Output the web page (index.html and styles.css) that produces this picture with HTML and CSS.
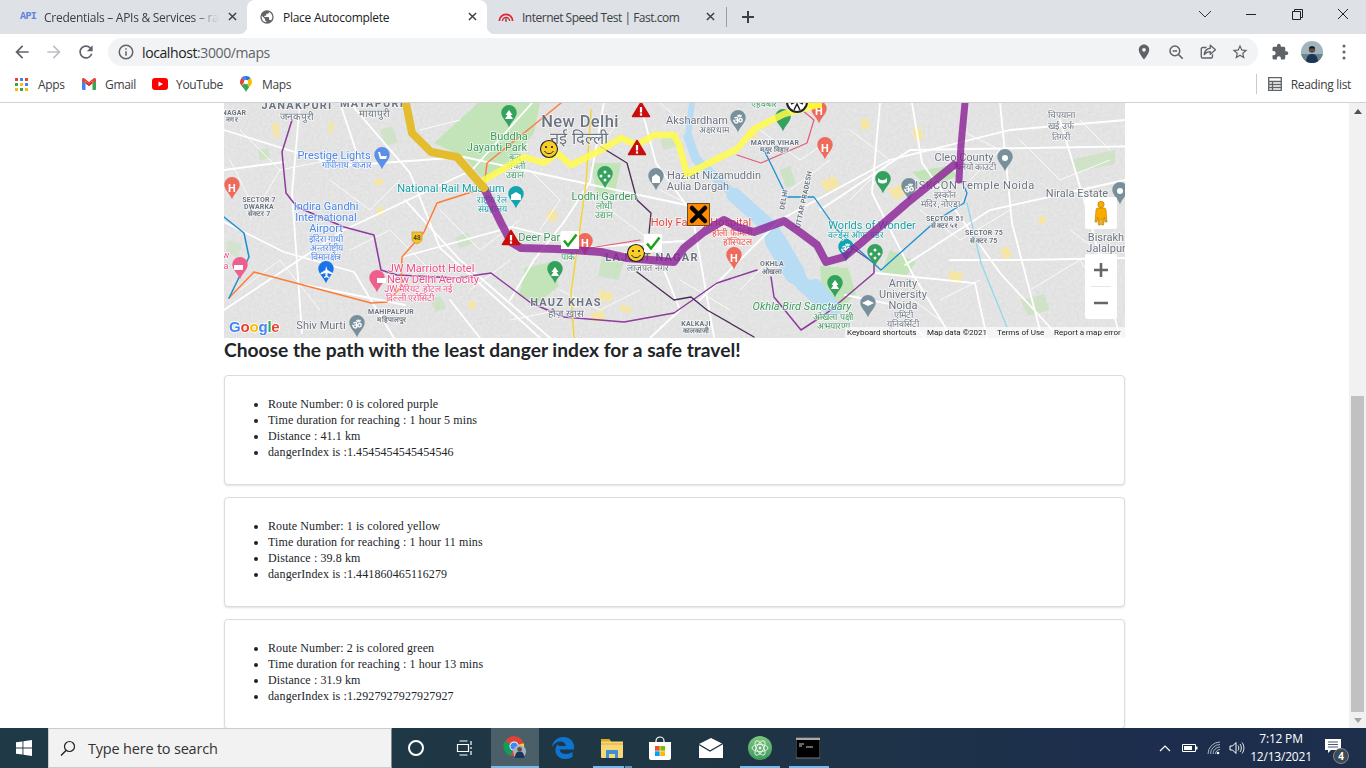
FILE: index.html
```html
<!DOCTYPE html>
<html lang="en">
<head>
<meta charset="utf-8">
<title>Place Autocomplete</title>
<link rel="stylesheet" href="styles.css">
</head>
<body>
<div class="screen">
  <header class="tabstrip">
    <div class="tab tab-first">
      <span class="api-fav">API</span>
      <span class="tab-title fade">Credentials – APIs &amp; Services – raksha</span>
      <svg class="tab-x" viewBox="0 0 10 10"><path d="M1 1l8 8M9 1l-8 8"/></svg>
    </div>
    <div class="tab tab-active">
      <svg class="fav" viewBox="0 0 24 24"><path fill="#5f6368" d="M12 2a10 10 0 100 20 10 10 0 000-20zm-1 17.900A8 8 0 014 12c0-.6.1-1.200.2-1.800L9 15v1c0 1.100.9 2 2 2v1.900zm6.900-2.500c-.3-.8-1-1.400-1.900-1.400h-1v-3c0-.6-.4-1-1-1H8v-2h2c.6 0 1-.4 1-1V7h2c1.100 0 2-.9 2-2v-.4a8 8 0 012.900 12.800z"/></svg>
      <span class="tab-title">Place Autocomplete</span>
      <svg class="tab-x" viewBox="0 0 10 10"><path d="M1 1l8 8M9 1l-8 8"/></svg>
    </div>
    <div class="tab tab-last">
      <svg class="fav" viewBox="0 0 18 14"><path d="M1.500 11.500a7.500 7.500 0 0115 0" fill="none" stroke="#e32636" stroke-width="2"/><path d="M5 11.500a4 4 0 018 0" fill="none" stroke="#e32636" stroke-width="1.600"/><path d="M8 12l1-5 1 5z" fill="#333"/></svg>
      <span class="tab-title tab-title-tight">Internet Speed Test | Fast.com</span>
      <svg class="tab-x" viewBox="0 0 10 10"><path d="M1 1l8 8M9 1l-8 8"/></svg>
    </div>
    <span class="tab-sep"></span>
    <svg class="newtab" viewBox="0 0 12 12"><path d="M6 0v12M0 6h12"/></svg>
    <div class="winctl">
      <svg class="wc" viewBox="0 0 46 14"><path d="M17 4l6 6 6-6" fill="none" stroke="#333"/></svg>
      <svg class="wc" viewBox="0 0 46 14"><path d="M18 7.500h10" stroke="#222" fill="none"/></svg>
      <svg class="wc" viewBox="0 0 46 14"><path d="M18.500 4.500h8v8h-8zM20.500 4.500v-2h8v8h-2" stroke="#222" fill="none"/></svg>
      <svg class="wc" viewBox="0 0 46 14"><path d="M18 2l10 10M28 2L18 12" stroke="#222" fill="none"/></svg>
    </div>
  </header>

  <nav class="toolbar">
    <button class="tbtn"><svg class="ico20" viewBox="0 0 24 24"><path fill="#5f6368" d="M20 11H7.830l5.590-5.590L12 4l-8 8 8 8 1.410-1.410L7.830 13H20z"/></svg></button>
    <button class="tbtn"><svg class="ico20" viewBox="0 0 24 24"><path fill="#bdc1c6" d="M4 11h12.170l-5.590-5.590L12 4l8 8-8 8-1.410-1.410L16.170 13H4z"/></svg></button>
    <button class="tbtn"><svg class="ico20" viewBox="0 0 24 24"><path fill="#5f6368" d="M17.650 6.350A7.958 7.958 0 0012 4c-4.420 0-7.990 3.580-7.990 8s3.570 8 7.990 8c3.730 0 6.840-2.550 7.730-6h-2.080A5.990 5.990 0 0112 18c-3.310 0-6-2.690-6-6s2.690-6 6-6c1.660 0 3.140.69 4.220 1.780L13 11h7V4l-2.350 2.350z"/></svg></button>
    <div class="omnibox">
      <svg class="info" viewBox="0 0 24 24"><path fill="#5f6368" d="M11 7h2v2h-2zm0 4h2v6h-2zm1-9a10 10 0 100 20 10 10 0 000-20zm0 18a8 8 0 110-16 8 8 0 010 16z"/></svg>
      <span class="url"><span class="host">localhost</span>:3000/maps</span>
      <span class="omni-icons">
        <button class="tbtn"><svg class="ico18" viewBox="0 0 24 24"><path fill="#5f6368" fill-rule="evenodd" d="M12 2C8.130 2 5 5.130 5 9c0 5.250 7 13 7 13s7-7.750 7-13c0-3.870-3.130-7-7-7zm0 9.500a2.500 2.500 0 110-5 2.500 2.500 0 010 5z"/></svg></button>
        <button class="tbtn"><svg class="ico18" viewBox="0 0 24 24"><circle cx="10.500" cy="10.500" r="6.500" fill="none" stroke="#5f6368" stroke-width="2"/><path d="M15.500 15.500L21 21M7.500 10.500h6" stroke="#5f6368" stroke-width="2" fill="none"/></svg></button>
        <button class="tbtn"><svg class="ico18" viewBox="0 0 24 24"><path d="M10 6H5a2 2 0 00-2 2v10a2 2 0 002 2h11a2 2 0 002-2v-3" fill="none" stroke="#5f6368" stroke-width="1.800"/><path d="M15 3l7 6-7 6v-3.500c-4 0-6 1.500-8 4 .5-5 3-8 8-8.500z" fill="none" stroke="#5f6368" stroke-width="1.800" stroke-linejoin="round"/></svg></button>
        <button class="tbtn"><svg class="ico18" viewBox="0 0 24 24"><path fill="#5f6368" d="M22 9.240l-7.190-.62L12 2 9.190 8.630 2 9.240l5.460 4.730L5.820 21 12 17.270 18.180 21l-1.630-7.030L22 9.240zM12 15.400l-3.760 2.270 1-4.280-3.320-2.880 4.380-.38L12 6.100l1.710 4.040 4.380.38-3.320 2.880 1 4.280L12 15.400z"/></svg></button>
      </span>
    </div>
    <button class="tbtn"><svg class="ico18" viewBox="0 0 24 24"><path fill="#5f6368" d="M20.500 11H19V7c0-1.100-.9-2-2-2h-4V3.500C13 2.120 11.880 1 10.500 1S8 2.120 8 3.500V5H4c-1.100 0-1.990.9-1.990 2v3.800H3.500c1.490 0 2.700 1.210 2.700 2.700s-1.210 2.700-2.700 2.700H2V20c0 1.100.9 2 2 2h3.800v-1.500c0-1.490 1.210-2.700 2.700-2.700 1.490 0 2.700 1.210 2.700 2.700V22H17c1.100 0 2-.9 2-2v-4h1.500c1.380 0 2.500-1.120 2.500-2.500S21.880 11 20.500 11z"/></svg></button>
    <button class="tbtn"><svg class="avatar" viewBox="0 0 22 22"><defs><clipPath id="avc"><circle cx="11" cy="11" r="11"/></clipPath></defs><g clip-path="url(#avc)"><rect width="22" height="22" fill="#9fb6c2"/><rect y="13" width="22" height="9" fill="#6f8587"/><path d="M5 22c0-6 2-9 6-9s6 3 6 9z" fill="#1d3557"/><circle cx="11" cy="8.500" r="3.200" fill="#6b4a3a"/><path d="M8 7.500c0-3 6-3 6 0z" fill="#1a1a1a"/></g></svg></button>
    <button class="tbtn"><svg class="dots" viewBox="0 0 4 16"><circle cx="2" cy="2" r="1.500"/><circle cx="2" cy="8" r="1.500"/><circle cx="2" cy="14" r="1.500"/></svg></button>
  </nav>

  <nav class="bookmarks">
    <span class="bm bm-apps">
      <svg class="bm-ico-apps" viewBox="0 0 13 13"><g><rect width="3" height="3" fill="#ea4335"/><rect x="5" width="3" height="3" fill="#4285f4"/><rect x="10" width="3" height="3" fill="#ea4335"/><rect y="5" width="3" height="3" fill="#34a853"/><rect x="5" y="5" width="3" height="3" fill="#fbbc05"/><rect x="10" y="5" width="3" height="3" fill="#4285f4"/><rect y="10" width="3" height="3" fill="#fbbc05"/><rect x="5" y="10" width="3" height="3" fill="#34a853"/><rect x="10" y="10" width="3" height="3" fill="#fbbc05"/></g></svg>
      <span>Apps</span>
    </span>
    <span class="bm bm-gmail">
      <svg class="bm-ico" viewBox="0 0 14 12"><path d="M0 2v9a1 1 0 001 1h2.500V5.500z" fill="#4285f4"/><path d="M14 2v9a1 1 0 01-1 1h-2.500V5.500z" fill="#34a853"/><path d="M0 1.500C0 .3 1.300-.4 2.300.3L7 4l4.700-3.700c1-.7 2.300 0 2.300 1.200V3l-3.500 2.600V2.800L7 5.500 3.500 2.800v2.800L0 3z" fill="#ea4335"/><path d="M3.500 2.800L7 5.500l3.500-2.700v2.800L7 8.200 3.500 5.600z" fill="#d93025"/></svg>
      <span>Gmail</span>
    </span>
    <span class="bm bm-yt">
      <svg class="bm-ico-yt" viewBox="0 0 16 12"><rect width="16" height="12" rx="3" fill="#f00"/><path d="M6.500 3.500v5L11 6z" fill="#fff"/></svg>
      <span>YouTube</span>
    </span>
    <span class="bm">
      <svg class="bm-ico-map" viewBox="0 0 12 16"><path d="M6 0a6 6 0 00-4.600 9.800L6 4z" fill="#ea4335"/><path d="M6 0a6 6 0 00-4.600 2.100L6 6z" fill="#4285f4"/><path d="M6 0c1.800 0 3.400.8 4.500 2L6 6z" fill="#1a73e8"/><path d="M10.500 2A6 6 0 0112 6c0 2-1.500 3.800-3 5.500L6 6z" fill="#fbbc04"/><path d="M1.400 9.800C3 11.800 5 13.500 6 16c1-2.500 2-3 3-4.500L6 6z" fill="#34a853"/><circle cx="6" cy="6" r="2.200" fill="#fff"/></svg>
      <span>Maps</span>
    </span>
    <span class="bm-sep"></span>
    <span class="bm bm-read">
      <svg class="bm-ico" viewBox="0 0 14 14"><path d="M.7.7h12.600v12.600H.7zM.7 4.500h12.600M.7 7.500h12.600M.7 10.500h12.600M4.500 4.500v8.800" fill="none" stroke="#5f6368" stroke-width="1.300"/></svg>
      <span>Reading list</span>
    </span>
  </nav>

  <div class="viewport">
    <main class="page">
      <svg class="map" viewBox="224 103 901 235" role="img" aria-label="Map of Delhi with routes">
        <defs>
          <filter id="grain" x="0" y="0" width="100%" height="100%"><feTurbulence type="fractalNoise" baseFrequency="0.35" numOctaves="2" seed="4"/><feColorMatrix values="0 0 0 0 0.45 0 0 0 0 0.45 0 0 0 0 0.45 0 0 0 0.5 -0.12"/></filter>
          <filter id="soft"><feGaussianBlur stdDeviation="0.4"/></filter>
          <symbol id="pin" viewBox="0 0 20 28" overflow="visible"><path d="M10 0a9 9 0 00-9 9c0 6 6.500 10 9 17 2.500-7 9-11 9-17a9 9 0 00-9-9z"/></symbol>
          <g id="warn"><path d="M0-8.500L8.500 5.500H-8.500z" fill="#c90d0d" stroke="#c90d0d" stroke-width="1.500" stroke-linejoin="round"/><rect x="-1.100" y="-4" width="2.200" height="5.500" fill="#fff"/><rect x="-1.100" y="2.400" width="2.200" height="2.200" fill="#fff"/></g>
          <g id="smile"><circle r="8.500" fill="#f8ce27" stroke="#222" stroke-width="1.100"/><circle cx="-3" cy="-2" r="1.100" fill="#222"/><circle cx="3" cy="-2" r="1.100" fill="#222"/><path d="M-4.500 2c2 3.500 7 3.500 9 0" fill="none" stroke="#222" stroke-width="1"/></g>
          <g id="check"><rect x="-9" y="-9" width="18" height="18" fill="#fff"/><path d="M-6 .5l4 5L6.500-5.500" fill="none" stroke="#1fa01f" stroke-width="2.500"/></g>
        </defs>

        <rect x="224" y="103" width="901" height="235" fill="#e7e7e7"/>
        <rect x="224" y="103" width="901" height="235" filter="url(#grain)" opacity=".55"/>

        <g filter="url(#soft)">
          <g fill="#c3e3b8">
            <path d="M434 143L478 103H540L534 133 507 167 484 180 464 157z"/>
            <path d="M591 163h30l-6 30-18 4z"/>
            <path d="M525 268l26-6 8 24-20 16-20-6z"/>
            <path d="M820 266l28 2 8 26-18 18-16-14z"/>
            <path d="M890 250l26 12-10 14-24-4z"/>
            <path d="M912 172l36-6 10 10-30 12z"/>
            <path d="M602 258l22 4-6 18-20-4z" opacity=".7"/>
            <path d="M455 238l12-6 6 12-14 4z" opacity=".6"/>
            <path d="M228 240l14 4-4 14-12-6z" opacity=".5"/>
            <path d="M1070 160l45-10v14l-40 8z" opacity=".6"/>
            <path d="M780 170l10-4 6 18-10 4z" opacity=".7"/>
            <path d="M380 130l12-4 6 16-12 4zM258 150l10-2 2 10-10 2zM1020 300l24-6 6 16-22 6zM660 140l14-6 4 12-14 4zM430 300l10-4 6 12-10 4z" opacity=".6"/>
          </g>
          <g fill="#f6e6a6">
            <path d="M272 124l6-2 2 14-6 2zM374 180l8-2 2 6-8 2zM378 206l6 2-2 8-6-2zM548 210l10 2-2 10-10-2zM640 250l12 2-2 8-10-2zM600 290l14 4-4 8-12-2zM820 182l14-6 6 10-14 6zM888 190l18-8 6 8-16 10zM912 130l8-4 4 12-8 4zM1000 250l8-4 4 10-8 4zM590 314l12-4 4 8-12 4zM950 270l14 4-6 10-10-4zM745 132l10-6 4 10-8 4zM330 120l4 4-2 10-4-2zM470 300l6 2-2 8-6-2zM620 305l12 2-2 6-10-2zM860 120l8-2 2 10-8 2zM1040 215l6 2-2 8-6-2z"/>
          </g>
          <g fill="none" stroke="#b8dcf3" stroke-linecap="round" stroke-linejoin="round">
            <path d="M688 137l8 22 38 36" stroke-width="9"/>
            <path d="M692 103l-4 34" stroke-width="6"/>
            <path d="M734 195l38 34 14 32 16 22 24 22" stroke-width="15"/>
            <path d="M775 240l20 34" stroke-width="21"/>
            <path d="M815 285l20 24" stroke-width="13"/>
          </g>
          <g fill="none" stroke="#fff" stroke-width="1.800" stroke-linecap="round">
            <path d="M224 130L340 166 464 157 560 178 700 208"/>
            <path d="M224 310l120-80 128-60 60-67"/>
            <path d="M300 103l-8 90 10 140"/>
            <path d="M350 103l60 70 30 75 100 90"/>
            <path d="M405 200l55 60 90 78"/>
            <path d="M402 257l110-30 82 20 90-6"/>
            <path d="M510 300l24-40 30-38 26-40 14-80"/>
            <path d="M224 222l60 30 70 20 40 66"/>
            <path d="M640 103l16 60 36 50 22 124"/>
            <path d="M700 300l80-80 110-60 120-30 115-10"/>
            <path d="M880 103l-8 90 40 80 40 65"/>
            <path d="M912 103l10 60 78 110 60 65"/>
            <path d="M1000 103l12 120 30 115"/>
            <path d="M1060 120l30 100 30 118"/>
            <path d="M820 210l90-60 240-4"/>
            <path d="M1020 260l105-2M950 260h70"/>
            <path d="M875 273l100 10 12 55"/>
            <path d="M845 295l50 10 30 33"/>
            <path d="M660 260l20 50-30 28"/>
            <path d="M450 300l30 38M305 285l100 20"/>
            <path d="M224 170l60-8M340 103l20 60"/>
            <path d="M1125 180L990 210 905 265"/>
          </g>
          <g fill="none" stroke="#fff" stroke-width=".9" stroke-linecap="round" opacity=".9">
            <path d="M240 130l40 40 50-10M250 220l30-50M330 180l40 30 30-30M350 250l40-20 40 40M440 210l40 40 40-30M470 290l40-30M530 170l30 30-20 30M560 290l40 20 40-20M610 210l40 30M620 120l-30 40M660 190l40 20M680 280l50 30M740 290l30-30M760 130l40 30 30-20M790 190l40-30M850 130l40 30-20 30M830 220l30 30M920 210l40 30 50-30M960 130l40 20-30 30M1020 140l40 40 50-20M1030 290l50-30 30 50M940 300l40-20M900 290l40 30M1070 230l40 30M1080 120l30 30M420 130l40-10M240 290l40-30 40 50M230 160l20 40M510 320l50-10M680 120l-20-17M850 200l30-30"/>
          </g>

          <g fill="none" stroke-linejoin="round" stroke-linecap="round">
            <path stroke="#8e3a9d" stroke-width="1.500" d="M292 120l-10 32 4 41 11 14 47 20 30 8 7 35 16 5 60 3 34-5 40 30 33 14 60 5 50-9 43-30 40-13"/>
            <path stroke="#8e3a9d" stroke-width="1.500" d="M771 277l3 20 27 33 26-17 47-40v-10l-23-16"/>
            <path stroke="#ff7b39" stroke-width="1.500" d="M229 298l25-26 117 31 16-1 14-15 1-30 22-25 13-29 47-15 3-25 74-60"/>
            <path stroke="#1a8fd1" stroke-width="1.500" d="M224 217l20 16 5 24-20 41"/>
            <path stroke="#4b2a55" stroke-width="1.300" d="M601 147l26 16 10 37 14 13-2 20"/>
            <path stroke="#4b2a55" stroke-width="1.300" d="M637 272l37 28 17-3 16 13 47 27"/>
            <path stroke="#f4d436" stroke-width="1.500" d="M591 110l-5 73-15 110 3 44"/>
            <path stroke="#e35a78" stroke-width="1.200" d="M737 155l24 8 46-20 7-23-24-20"/>
            <path stroke="#1a8fd1" stroke-width="1.300" d="M764 150l23 47h27l23 33 44 40 56-50 27-17 3-10-6-13"/>
            <path stroke="#8fd9e8" stroke-width="1.300" d="M967 203l14 60 26 64"/>
            <path stroke="#e35a78" stroke-width="1.200" d="M640 240l-50 8"/>
          </g>
        </g>

        <g class="pins">
          <use href="#pin" x="500" y="105" width="18" height="24" fill="#34a15d"/>
          <use href="#pin" x="373" y="147" width="18" height="24" fill="#5b8fe8"/>
          <use href="#pin" x="223" y="177" width="18" height="24" fill="#ee6a5a"/>
          <use href="#pin" x="507" y="186" width="18" height="24" fill="#12a5b0"/>
          <use href="#pin" x="596" y="166" width="18" height="24" fill="#34a15d"/>
          <use href="#pin" x="647" y="168" width="18" height="24" fill="#78909c"/>
          <use href="#pin" x="317" y="261" width="18" height="24" fill="#1a73e8"/>
          <use href="#pin" x="368" y="270" width="18" height="24" fill="#ee5f8e"/>
          <use href="#pin" x="231" y="257" width="18" height="24" fill="#ee5f8e"/>
          <use href="#pin" x="348" y="315" width="18" height="24" fill="#78909c"/>
          <use href="#pin" x="546" y="261" width="18" height="24" fill="#34a15d"/>
          <use href="#pin" x="576" y="233" width="18" height="24" fill="#ee6a5a"/>
          <use href="#pin" x="729" y="110" width="18" height="24" fill="#78909c"/>
          <use href="#pin" x="774" y="109" width="18" height="24" fill="#34a15d"/>
          <use href="#pin" x="816" y="137" width="18" height="24" fill="#ee6a5a"/>
          <use href="#pin" x="725" y="247" width="18" height="24" fill="#ee6a5a"/>
          <use href="#pin" x="810" y="101" width="18" height="24" fill="#ee6a5a"/>
          <use href="#pin" x="874" y="171" width="18" height="24" fill="#34a15d"/>
          <use href="#pin" x="900" y="178" width="18" height="24" fill="#78909c"/>
          <use href="#pin" x="996" y="149" width="18" height="24" fill="#78909c"/>
          <use href="#pin" x="1111" y="182" width="18" height="24" fill="#78909c"/>
          <use href="#pin" x="837" y="239" width="18" height="24" fill="#12a5b0"/>
          <use href="#pin" x="866" y="244" width="18" height="24" fill="#34a15d"/>
          <use href="#pin" x="826" y="275" width="18" height="24" fill="#34a15d"/>
          <use href="#pin" x="859" y="295" width="18" height="24" fill="#78909c"/>
          <g class="pin-glyph">
            <text x="232" y="192">H</text><text x="585" y="247">H</text><text x="825" y="152">H</text><text x="734" y="262">H</text><text x="819" y="115">H</text>
            <text x="738" y="124">ॐ</text><text x="909" y="193">ॐ</text><text x="846" y="253">ॐ</text><text x="357" y="329">ॐ</text>
          </g>
          <path d="M326 266l1.500 4 5 3v1.500l-5-1.500v3l1.500 1v1l-2.500-.7-2.500.7v-1l1.500-1v-3l-5 1.500V273l5-3z" fill="#fff"/>
          <path d="M509 110l3.500 5h-2l2.500 4h-8l2.500-4h-2z" fill="#fff"/>
          <path d="M555 267l3.500 5h-2l2.500 4h-8l2.500-4h-2z" fill="#fff"/>
          <path d="M835 280l3.500 5h-2l2.500 4h-8l2.500-4h-2z" fill="#fff"/>
          <circle cx="1005" cy="158" r="3" fill="#fff"/><circle cx="1120" cy="191" r="3" fill="#fff"/>
          <g fill="#fff"><circle cx="605" cy="172" r="1.500"/><circle cx="601" cy="176" r="1.500"/><circle cx="609" cy="176" r="1.500"/><circle cx="605" cy="180" r="1.500"/><circle cx="875" cy="250" r="1.500"/><circle cx="871" cy="254" r="1.500"/><circle cx="879" cy="254" r="1.500"/><circle cx="875" cy="258" r="1.500"/></g>
          <path d="M378 152h2l1 4h6l-1 3h-6zM878 178c3 3 6 3 9 0v4c-3 2-6 2-9 0z" fill="#fff"/>
          <path d="M377 278h9v5h-9zM234 265h9v5h-9z" fill="#fff"/>
          <path d="M652 183v-6l4-3 4 3v6z" fill="#fff"/>
          <path d="M511 200v-5l5-3 5 3v5z" fill="#fff"/>
          <path d="M862 303l6-3 6 3-6 3z" fill="#fff"/>
          <path d="M412 232h10v7c0 3-3 4-5 5-2-1-5-2-5-5z" fill="#f2c230" stroke="#c99a1b" stroke-width=".7"/>
          <text class="hw" x="417" y="240">48</text>
        </g>

        <g class="lb lb-grey">
          <text class="caps" x="297" y="109">JANAKPURI</text>
          <text x="297" y="120" class="small-g">जनकपुरी</text>
          <text class="caps" x="372" y="107">MAYAPURI</text>
          <text x="374" y="117" class="small-g">मायापुरी</text>
          <text class="big" x="580" y="127">New Delhi</text>
          <text class="big" x="579" y="144">नई दिल्ली</text>
          <text class="caps" x="566" y="306">HAUZ KHAS</text>
          <text x="566" y="317" class="small-g">हौज़ खास</text>
          <text class="caps" x="652" y="261">LAJPAT NAGAR</text>
          <text x="648" y="271" class="small">लाजपत नगर</text>
          <text x="321" y="329">Shiv Murti</text>
          <text class="mini" x="391" y="314">MAHIPALPUR</text>
          <text class="mini" x="392" y="322">महिपालपुर</text>
          <text class="mini" x="259" y="202">SECTOR 7</text>
          <text class="mini" x="259" y="209">DWARKA</text>
          <text class="mini" x="259" y="216">सेक्टर 7</text>
          <text class="mini" x="234" y="115">NAGAR</text>
          <text class="mini" x="232" y="122">नगर</text>
          <text x="697" y="124">Akshardham</text>
          <text class="small" x="714" y="133">अक्षरधाम</text>
          <text x="714" y="179">Hazrat Nizamuddin</text>
          <text x="698" y="190">Aulia Dargah</text>
          <text class="mini" x="775" y="145">MAYUR VIHAR</text>
          <text class="mini" x="775" y="152">मयूर विहार</text>
          <text x="964" y="161">Cleo County</text>
          <text x="975" y="170" class="small">क्लियो काउंटी</text>
          <text class="wide" x="975" y="189">ISKCON Temple Noida</text>
          <text class="small" x="945" y="198">इस्कॉन</text>
          <text class="small" x="941" y="207">मंदिर, नोएडा</text>
          <text x="1077" y="197">Nirala Estate</text>
          <text class="mini" x="945" y="221">SECTOR 51</text>
          <text class="mini" x="945" y="228">सेक्टर ५१</text>
          <text class="mini" x="984" y="235">SECTOR 75</text>
          <text class="mini" x="984" y="243">सेक्टर 75</text>
          <text x="1106" y="241">Bisrakh</text>
          <text x="1106" y="252">Jalalpur</text>
          <text x="903" y="287">Amity</text>
          <text x="903" y="298">University</text>
          <text x="903" y="309">Noida</text>
          <text class="small" x="903" y="318">एमिटी</text>
          <text class="small" x="903" y="327">यूनिवर्सिटी</text>
          <text class="mini" x="772" y="266">OKHLA</text>
          <text class="mini" x="772" y="274">ओखला</text>
          <text class="mini" x="696" y="326">KALKAJI</text>
          <text class="mini" x="696" y="333">कालकाजी</text>
          <text x="1061" y="118" class="small">चिपयाना</text>
          <text x="1061" y="129" class="small">खई उर्फ</text>
          <text x="1061" y="140" class="small">तिगरी</text>
          <text class="mini" transform="translate(786 200) rotate(-80)" x="0" y="0">DELHI</text>
          <text class="mini" transform="translate(806 200) rotate(-78)" x="0" y="0">UTTAR PRADESH</text>
        </g>
        <g class="lb lb-blue">
          <text x="334" y="159">Prestige Lights</text>
          <text class="small" x="347" y="168">गोपीनाथ बाजार</text>
          <text x="326" y="210">Indira Gandhi</text>
          <text x="326" y="221">International</text>
          <text x="326" y="232">Airport</text>
          <text class="small" x="326" y="242">इंदिरा गांधी</text>
          <text class="small" x="326" y="251">अन्तर्राष्ट्रीय</text>
          <text class="small" x="326" y="260">विमानक्षेत्र</text>
        </g>
        <g class="lb lb-green">
          <text x="509" y="140">Buddha</text>
          <text x="497" y="151">Jayanti Park</text>
          <text class="small" x="515" y="160">बुद्ध</text>
          <text class="small" x="515" y="169">जयंती</text>
          <text class="small" x="515" y="178">उद्यान</text>
          <text x="604" y="200">Lodhi Garden</text>
          <text class="small" x="604" y="209">लोधी</text>
          <text class="small" x="604" y="218">उद्यान</text>
          <text x="542" y="241">Deer Park</text>
          <text class="small" x="568" y="260">पार्क</text>
          <text class="it" x="802" y="310">Okhla Bird Sanctuary</text>
          <text class="small" x="833" y="320">ओखला पक्षी</text>
          <text class="small" x="833" y="329">अभयारण्य</text>
          <text class="small" x="764" y="107">एहवबार</text>
        </g>
        <g class="lb lb-teal">
          <text x="451" y="192">National Rail Museum</text>
          <text class="small" x="492" y="203">राष्ट्रीय रेल</text>
          <text class="small" x="492" y="212">संग्रहालय</text>
          <text x="872" y="229">Worlds of Wonder</text>
          <text class="small" x="856" y="238">वर्ल्ड्स ऑफ़ वंडर</text>
        </g>
        <g class="lb lb-pink">
          <text x="431" y="272">JW Marriott Hotel</text>
          <text x="433" y="283">New Delhi Aerocity</text>
          <text class="small" x="418" y="292">JW मैरियट होटल नई</text>
          <text class="small" x="410" y="301">दिल्ली एरोसिटी</text>
          <text class="small" x="226" y="258">w</text>
          <text class="small" x="226" y="269">a</text>
        </g>
        <g class="lb lb-red">
          <text x="701" y="226">Holy Family Hospital</text>
          <text class="small" x="732" y="236">होली फैमिली</text>
          <text class="small" x="737" y="245">हॉस्पिटल</text>
        </g>

        <g fill="none" stroke-linejoin="round" stroke-linecap="round">
          <path stroke="#8a1f96" stroke-opacity=".8" stroke-width="8" d="M484 188l17 35 10 19 10 6 36 1 44 3 26 6 47 4 10-14 20-16 20-12 13 7 17 5 30-11 17 12 16 12 9 17 18-5 17-14 46-40 47-38"/>
          <path stroke="#8a1f96" stroke-opacity=".8" stroke-width="7" d="M959 180l2-35 4-42"/>
          <path stroke="#fffb4a" stroke-opacity=".85" stroke-width="6.500" d="M484 180l40-23 20 6 13-10 14 12 30-15 20-12 16 7 17-10h20l5 10 8 29 50-25 17-20 30-15 33-9"/>
          <path stroke="#e3bd2e" stroke-width="8" d="M406 103l6 30 19 19 26 5 27 31"/>
        </g>

        <use href="#warn" x="641" y="111"/>
        <use href="#warn" x="637" y="149"/>
        <use href="#warn" x="511" y="239"/>
        <use href="#smile" x="549" y="149"/>
        <use href="#smile" x="636" y="253"/>
        <use href="#check" x="570" y="240"/>
        <use href="#check" x="653" y="243"/>
        <rect x="687.500" y="203.500" width="22" height="22" fill="#ff8a00" stroke="#6b4a2a"/>
        <path d="M692 208l13 13M705 208l-13 13" stroke="#000" stroke-width="4.500" stroke-linecap="round"/>
        <circle cx="797" cy="102" r="10" fill="#fff" stroke="#222" stroke-width="2"/>
        <path d="M791 104l6-3 6 3M794 110l3-6 3 6" fill="none" stroke="#222" stroke-width="1.500"/>
        <path d="M808 103h14v5h-14z" fill="#fff530"/>

        <text class="glogo" x="229" y="332"><tspan fill="#4285f4">G</tspan><tspan fill="#ea4335">o</tspan><tspan fill="#fbbc05">o</tspan><tspan fill="#4285f4">g</tspan><tspan fill="#34a853">l</tspan><tspan fill="#ea4335">e</tspan></text>

        <rect x="845" y="327" width="280" height="11" fill="#fff" opacity=".65"/>
        <g class="attr">
          <text x="847" y="335">Keyboard shortcuts</text>
          <text x="927" y="335">Map data ©2021</text>
          <text x="997" y="335">Terms of Use</text>
          <text x="1054" y="335">Report a map error</text>
        </g>

        <g class="mapctl">
          <rect x="1085" y="197" width="32" height="32" rx="2" fill="#fff"/>
          <circle cx="1101" cy="204.500" r="3.200" fill="#f9ab00" stroke="#b57a00" stroke-width=".6"/>
          <path d="M1095 222l1-12c0-1.500 1-2 2-2h6c1 0 2 .5 2 2l1 12h-2l-.8-5-.7 8h-1.800v-6h-1.400v6h-1.800l-.7-8-.8 5z" fill="#f9ab00" stroke="#b57a00" stroke-width=".6"/>
          <rect x="1085" y="254" width="32" height="65" rx="2" fill="#fff"/>
          <path d="M1091 286.500h20" stroke="#e6e6e6"/>
          <path d="M1094 270h14M1101 263v14M1094 303h14" stroke="#666" stroke-width="2.600"/>
        </g>
      </svg>

      <h1 class="headline">Choose the path with the least danger index for a safe travel!</h1>

      <section class="card">
        <ul>
          <li>Route Number: 0 is colored purple</li>
          <li>Time duration for reaching : 1 hour 5 mins</li>
          <li>Distance : 41.1 km</li>
          <li>dangerIndex is :1.4545454545454546</li>
        </ul>
      </section>
      <section class="card">
        <ul>
          <li>Route Number: 1 is colored yellow</li>
          <li>Time duration for reaching : 1 hour 11 mins</li>
          <li>Distance : 39.8 km</li>
          <li>dangerIndex is :1.441860465116279</li>
        </ul>
      </section>
      <section class="card">
        <ul>
          <li>Route Number: 2 is colored green</li>
          <li>Time duration for reaching : 1 hour 13 mins</li>
          <li>Distance : 31.9 km</li>
          <li>dangerIndex is :1.2927927927927927</li>
        </ul>
      </section>
    </main>
    <aside class="scrollbar">
      <span class="sb-btn"><span class="arrow-up"></span></span>
      <span class="sb-thumb"></span>
      <span class="sb-btn sb-btn-down"><span class="arrow-down"></span></span>
    </aside>
  </div>

  <footer class="taskbar">
    <span class="start"><svg class="win" viewBox="0 0 16 16"><path fill="#fff" d="M0 2.300l6.500-.9v6.200H0zM7.400 1.300L16 0v7.600H7.400zM0 8.400h6.500v6.200L0 13.700zM7.400 8.400H16V16l-8.600-1.200z"/></svg></span>
    <span class="search">
      <svg class="search-ico" viewBox="0 0 16 16"><circle cx="9.500" cy="6.500" r="5" fill="none" stroke="#222" stroke-width="1.200"/><path d="M6 10.500L1 15.500" stroke="#222" stroke-width="1.400"/></svg>
      <span>Type here to search</span>
    </span>
    <span class="tb-cell"><span class="cortana"></span></span>
    <span class="tb-cell"><svg class="tv" viewBox="0 0 16 16"><path d="M3.500 1h8M3.500 15h8M1.500 4.500h11v7h-11zM15 1v4M15 7v2M15 11v4" fill="none" stroke="#fff" stroke-width="1.200"/></svg></span>
    <span class="tb-cell app app-chrome run">
      <svg class="app-ico" viewBox="0 0 26 26"><circle cx="12" cy="12" r="11" fill="#db4437"/><path d="M12 12L2 6.500A11 11 0 008 22.500z" fill="#0f9d58"/><path d="M12 12l10.500-3A11 11 0 0112 23z" fill="#ffcd40"/><circle cx="12" cy="12" r="5" fill="#fff"/><circle cx="12" cy="12" r="4" fill="#4285f4"/><circle cx="18" cy="18" r="7" fill="#9fb6c2"/><path d="M13 25c0-5 2-7 5-7s5 2 5 7z" fill="#1d3557"/><circle cx="18" cy="15.500" r="2.500" fill="#6b4a3a"/></svg>
    </span>
    <span class="tb-cell app">
      <svg class="app-ico" viewBox="0 0 24 24"><path fill="#0d74d1" d="M12.500 1C6 1 1.500 5.500 1 11c2-3.500 5-5.500 8.500-5.500 3 0 5 1.500 5.500 4.500H7.500C8 6.800 5 9 4.500 13c-.7 5.500 3.500 10 9.500 10 3 0 5.500-.8 7.500-2v-5c-2 1.300-4.300 2-6.500 2-3.500 0-6-1.500-6.500-4.500H23V11C23 5 18.500 1 12.500 1z"/></svg>
    </span>
    <span class="tb-cell app app-folder">
      <svg class="app-ico" viewBox="0 0 24 22"><path d="M1 2h8l2 2.500h12V20a1 1 0 01-1 1H2a1 1 0 01-1-1z" fill="#f8d775"/><path d="M1 2h8l2 2.500H1z" fill="#e0a92c"/><path d="M1 6h22v2H1z" fill="#eac15a"/><path d="M6 21v-8h12v8h-3v-4H9v4z" fill="#3f8fd6"/></svg>
      <span class="ul ul-a"></span><span class="ul ul-b"></span>
    </span>
    <span class="tb-cell app">
      <svg class="app-ico" viewBox="0 0 24 24"><path d="M8 7V5a4 4 0 018 0v2" fill="none" stroke="#fff" stroke-width="1.200"/><path d="M1 6h22v16a2 2 0 01-2 2H3a2 2 0 01-2-2z" fill="#fff"/><rect x="7" y="10" width="4.700" height="4.700" fill="#f25022"/><rect x="12.300" y="10" width="4.700" height="4.700" fill="#7fba00"/><rect x="7" y="15.300" width="4.700" height="4.700" fill="#00a4ef"/><rect x="12.300" y="15.300" width="4.700" height="4.700" fill="#ffb900"/></svg>
    </span>
    <span class="tb-cell app app-mail">
      <svg class="app-ico" viewBox="0 0 24 20"><path d="M0 6L12 0l12 6v14H0z" fill="#fff"/><path d="M0 6.500l11 6.500L24 5.500" fill="none" stroke="#1f3644" stroke-width="1.400"/></svg>
    </span>
    <span class="tb-cell app run-atom">
      <svg class="app-ico" viewBox="0 0 24 24"><defs><linearGradient id="atg" x1="0" y1="0" x2="0" y2="1"><stop offset="0" stop-color="#7bc67e"/><stop offset="1" stop-color="#3d9a5f"/></linearGradient></defs><circle cx="12" cy="12" r="12" fill="url(#atg)"/><g fill="none" stroke="#e5f3e2" stroke-width="1"><ellipse cx="12" cy="12" rx="8" ry="3.500"/><ellipse cx="12" cy="12" rx="8" ry="3.500" transform="rotate(60 12 12)"/><ellipse cx="12" cy="12" rx="8" ry="3.500" transform="rotate(120 12 12)"/></g><circle cx="12" cy="12" r="1.500" fill="#e5f3e2"/></svg>
      <span class="ul ul-atom"></span>
    </span>
    <span class="tb-cell app run-cmd">
      <svg class="app-ico" viewBox="0 0 24 20"><rect width="24" height="20" fill="#000" stroke="#777"/><rect width="24" height="2" fill="#aaa"/><path d="M3 6h5M3 8h3M10 9h7" stroke="#ccc" stroke-width="1"/></svg>
      <span class="ul ul-cmd"></span>
    </span>

    <span class="tray">
      <svg class="tr-ico tr-caret" viewBox="0 0 12 8"><path d="M1 7l5-5 5 5" fill="none" stroke="#fff" stroke-width="1.200"/></svg>
      <svg class="tr-ico tr-batt" viewBox="0 0 16 10"><path d="M.5 1.500h13v7H.5z" fill="none" stroke="#fff"/><rect x="2" y="3" width="8" height="4" fill="#fff"/><rect x="14" y="3.500" width="1.500" height="3" fill="#fff"/></svg>
      <svg class="tr-ico tr-wifi" viewBox="0 0 14 14"><path d="M1 13a12 12 0 0112-12M3.500 13A9.500 9.500 0 0113 3.500M6 13a7 7 0 017-7M8.500 13A4.500 4.500 0 0113 8.500" fill="none" stroke="#cfd6dc" stroke-width=".8"/><circle cx="11" cy="12" r="1.300" fill="#fff"/></svg>
      <svg class="tr-ico tr-vol" viewBox="0 0 16 14"><path d="M1 5h2.500L7 1.500v11L3.500 9H1z" fill="none" stroke="#fff"/><path d="M9 4.500c1 1.500 1 3.500 0 5M11 3c1.800 2.200 1.800 5.800 0 8M13 1.500c2.500 3 2.500 8 0 11" fill="none" stroke="#fff" stroke-width=".9"/></svg>
      <span class="clock"><span>7:12 PM</span><span>12/13/2021</span></span>
      <span class="notify">
        <svg class="notify-ico" viewBox="0 0 16 16"><path d="M0 1h16v11H6l-3 3v-3H0z" fill="#fff"/><path d="M3 4h10M3 6.500h10M3 9h10" stroke="#1d2d4d" stroke-width=".8"/></svg>
        <span class="notify-badge">4</span>
      </span>
    </span>
  </footer>
</div>
</body>
</html>
```
FILE: styles.css
```css
* { box-sizing: border-box; }
html, body { margin: 0; padding: 0; height: 100%; overflow: hidden; }
body { background: #fff; font-family: "Open Sans", "Noto Sans", sans-serif; }
button { border: 0; background: none; padding: 0; margin: 0; }

.screen { width: 1366px; height: 768px; display: flex; flex-direction: column; overflow: hidden; }

/* tab strip */
.tabstrip { height: 34px; flex: none; background: #dee1e6; display: flex; align-items: center; }
.tab { height: 34px; display: flex; align-items: center; position: relative; font-size: 12px; color: #3c4043; }
.tab-first { width: 247px; padding-left: 20px; }
.tab-active { width: 240px; padding-left: 12px; background: #fff; border-radius: 8px 8px 0 0; color: #202124; }
.tab-active::before, .tab-active::after { content: ""; position: absolute; bottom: 0; width: 8px; height: 8px; }
.tab-active::before { left: -8px; background: radial-gradient(circle at 0 0, #dee1e6 8px, #fff 8.5px); }
.tab-active::after { right: -8px; background: radial-gradient(circle at 100% 0, #dee1e6 8px, #fff 8.5px); }
.tab-last { width: 239px; padding-left: 11px; }
.api-fav { width: 16px; font: bold 10px/16px "Liberation Mono", monospace; color: #5f83e0; letter-spacing: -.6px; margin-right: 8px; }
.fav { width: 16px; height: 16px; flex: none; margin-right: 8px; }
.tab-title { flex: none; white-space: nowrap; letter-spacing: -.27px; }
.tab-title-tight { letter-spacing: -.5px; }
.fade { width: 175px; overflow: hidden; -webkit-mask-image: linear-gradient(90deg, #000 85%, transparent); mask-image: linear-gradient(90deg, #000 85%, transparent); }
.tab-x { width: 9px; height: 9px; flex: none; position: absolute; right: 10px; top: 12px; fill: none; stroke: #3c4043; stroke-width: 1.600; }
.tab-last .tab-x { right: 11.500px; }
.tab-sep { width: 1px; height: 20px; background: #9aa0a6; flex: none; }
.newtab { width: 12px; height: 12px; flex: none; margin-left: 15px; fill: none; stroke: #3c4043; stroke-width: 2; }
.winctl { margin-left: auto; display: flex; align-self: flex-start; }
.wc { width: 46px; height: 14px; margin-top: 7px; display: block; }

/* toolbar */
.toolbar { height: 34px; flex: none; background: #fff; display: flex; align-items: center; padding: 2px 6px 0; }
.tbtn { width: 32px; height: 28px; flex: none; display: flex; align-items: center; justify-content: center; }
.ico20 { width: 20px; height: 20px; }
.ico18 { width: 18px; height: 18px; }
.avatar { width: 22px; height: 22px; }
.dots { width: 4px; height: 16px; fill: #5f6368; }
.omnibox { flex: 1; height: 28px; margin: 0 6px; background: #f1f3f4; border-radius: 14px; display: flex; align-items: center; padding: 0 2px 0 9px; }
.info { width: 18px; height: 18px; flex: none; }
.url { margin-left: 7px; font-size: 14px; color: #5f6368; letter-spacing: -.4px; }
.host { color: #202124; }
.omni-icons { margin-left: auto; display: flex; }

/* bookmarks */
.bookmarks { height: 35px; flex: none; background: #fff; border-bottom: 1px solid #d0d2d5; display: flex; align-items: center; padding: 0 0 2px 15px; font-size: 12px; color: #3c4043; }
.bm { display: flex; align-items: center; letter-spacing: -.33px; white-space: nowrap; }
.bm-apps { width: 67px; gap: 10px; }
.bm-gmail { width: 70px; gap: 9px; }
.bm-yt { width: 88px; gap: 8px; }
.bm-ico-apps { width: 13px; height: 13px; }
.bm-ico { width: 14px; height: 12px; flex: none; }
.bm-ico-yt { width: 16px; height: 12px; }
.bm-ico-map { width: 12px; height: 16px; margin-right: 10px; }
.bm-sep { width: 1px; height: 20px; background: #c8cacd; margin-left: auto; margin-right: 11px; }
.bm-read { margin-right: 15px; gap: 9px; }
.bm-read .bm-ico { height: 14px; }

/* page */
.viewport { flex: 1; min-height: 0; display: flex; overflow: hidden; }
.page { flex: 1; min-width: 0; padding: 0 224px; overflow: hidden; }
.map { display: block; width: 901px; height: 235px; }
.headline { margin: 0 0 11px; height: 26px; font: bold 19.200px/23px Lato, sans-serif; color: #212529; white-space: nowrap; }
.card { width: 901px; height: 110px; margin-bottom: 12px; background: #fff; border: 1px solid #dcdcdc; border-radius: 4px; box-shadow: 0 1px 2px rgba(0,0,0,.12); padding-top: 20px; }
.card ul { margin: 0; padding: 0 0 0 43px; font: 12px/16px "Liberation Serif", serif; letter-spacing: .1px; color: #212529; }

/* map text */
.lb text { font: 11px Roboto, sans-serif; text-anchor: middle; paint-order: stroke; stroke: rgba(255,255,255,.75); stroke-width: 1.500px; }
.lb .small { font-size: 9px; }
.lb .small-g { font-size: 10px; }
.lb .mini { font-size: 7px; font-weight: 700; letter-spacing: .2px; }
.lb .caps { font-size: 11px; font-weight: 700; letter-spacing: 1.200px; }
.lb .big { font-size: 16.500px; font-weight: 500; letter-spacing: .4px; }
.lb .it { font-style: italic; }
.lb .wide { letter-spacing: .55px; }
.lb-grey text { fill: #6b7480; }
.lb-blue text { fill: #4a86e8; }
.lb-green text { fill: #3c9a5f; }
.lb-teal text { fill: #14a0a8; }
.lb-pink text { fill: #ee4f87; }
.lb-red text { fill: #e8453c; }
.pin-glyph text { font: bold 11px Roboto, sans-serif; text-anchor: middle; fill: #fff; }
.hw { font: bold 6.500px Roboto, sans-serif; text-anchor: middle; fill: #5a4a10; }
.glogo { font: bold 15px "Liberation Sans", sans-serif; letter-spacing: -.2px; paint-order: stroke; stroke: #fff; stroke-width: 1.500px; }
.attr text { font: 8px Roboto, sans-serif; fill: #222; }

/* scrollbar */
.scrollbar { width: 17px; flex: none; background: #f1f1f1; display: flex; flex-direction: column; }
.sb-btn { height: 17px; flex: none; display: flex; align-items: center; justify-content: center; }
.sb-btn-down { margin-top: auto; }
.arrow-up { border: 4px solid transparent; border-top: 0; border-bottom: 5px solid #505050; }
.arrow-down { border: 4px solid transparent; border-bottom: 0; border-top: 5px solid #a3a3a3; }
.sb-thumb { height: 316px; margin: 276px 2px 0; background: #c1c1c1; flex: none; }

/* taskbar */
.taskbar { height: 40px; flex: none; display: flex; align-items: stretch; background: linear-gradient(90deg, #1f3a46 0, #1f3644 50%, #1c2d4d 85%, #1d2f4b 100%); color: #fff; }
.start { width: 48px; display: flex; align-items: center; justify-content: center; }
.win { width: 16px; height: 16px; }
.search { width: 344px; background: #f2f2f2; border: 1px solid #c9cdd0; border-right-color: #888; display: flex; align-items: center; padding-left: 11px; gap: 12px; color: #333; font: 14.500px "Open Sans", sans-serif; letter-spacing: -.2px; }
.search-ico { width: 16px; height: 16px; }
.tb-cell { width: 48px; display: flex; align-items: center; justify-content: center; position: relative; flex: none; }
.cortana { width: 16px; height: 16px; border: 2px solid #fff; border-radius: 50%; }
.tv { width: 16px; height: 16px; }
.app { width: 48px; }
.app-chrome { margin-left: 3px; background: #4b5f69; }
.app-chrome.run { border-bottom: 2px solid #76b9ed; }
.app-folder { margin-left: 1px; }
.app-mail { margin-left: 3px; }
.run-atom { margin-left: 1px; }
.app-ico { width: 24px; height: 24px; }
.ul { position: absolute; bottom: 0; height: 2px; background: #76b9ed; }
.ul-a { left: 5px; width: 31px; }
.ul-b { left: 37px; width: 7px; opacity: .7; }
.ul-atom { left: 4px; width: 40px; }
.ul-cmd { left: 5px; width: 40px; }
.tray { margin-left: auto; display: flex; align-items: center; }
.tr-ico { flex: none; }
.tr-caret { width: 12px; height: 8px; margin-right: 11px; }
.tr-batt { width: 16px; height: 10px; margin-right: 9px; }
.tr-wifi { width: 14px; height: 14px; margin-right: 8px; }
.tr-vol { width: 16px; height: 14px; margin-right: 7px; }
.clock { width: 58px; margin-right: 10px; display: flex; flex-direction: column; align-items: center; font: 12px/18px "Open Sans", sans-serif; letter-spacing: -.2px; white-space: nowrap; }
.clock span { height: 18px; line-height: 18px; }
.notify { width: 46px; height: 40px; position: relative; display: flex; align-items: center; justify-content: center; }
.notify-ico { width: 16px; height: 16px; margin-left: -20px; margin-top: -4px; }
.notify-badge { position: absolute; left: 13px; top: 20px; width: 16px; height: 16px; border-radius: 50%; background: #3d4a55; border: 1px solid #888; font: bold 10px/14px "Open Sans", sans-serif; text-align: center; }
```
